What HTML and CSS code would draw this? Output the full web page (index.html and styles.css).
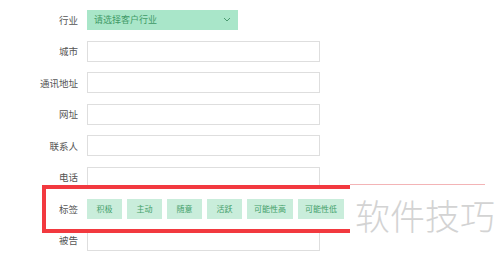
FILE: index.html
```html
<!DOCTYPE html>
<html lang="zh">
<head>
  <meta charset="UTF-8">
  <title>客户信息</title>
  <link rel="stylesheet" href="styles.css">
</head>
<body>
  <div class="form">
    <div class="row">
      <label>行业</label>
      <div class="select">
        <span>请选择客户行业</span>
        <svg width="8" height="5" viewBox="0 0 8 5"><path d="M1 1l3 3 3-3" fill="none" stroke="#4a9a70" stroke-width="1"/></svg>
      </div>
    </div>
    <div class="row"><label>城市</label><div class="input"></div></div>
    <div class="row"><label>通讯地址</label><div class="input"></div></div>
    <div class="row"><label>网址</label><div class="input"></div></div>
    <div class="row"><label>联系人</label><div class="input"></div></div>
    <div class="row"><label>电话</label><div class="input"></div></div>
    <div class="row">
      <label>标签</label>
      <div class="tags">
        <span class="tag">积极</span>
        <span class="tag">主动</span>
        <span class="tag">随意</span>
        <span class="tag">活跃</span>
        <span class="tag">可能性高</span>
        <span class="tag">可能性低</span>
      </div>
    </div>
    <div class="row"><label>被告</label><div class="input"></div></div>
  </div>

  <div class="mark-box"></div>
  <div class="mark-line"></div>
  <div class="watermark">软件技巧</div>
</body>
</html>
```
FILE: styles.css
```css
body {
  margin: 0;
  background: #fff;
  font-family: "Noto Sans CJK SC", "Noto Sans", sans-serif;
  color: #555;
  position: relative;
  height: 259px;
  overflow: hidden;
}
.form {
  padding-top: 9px;
}
.row {
  display: flex;
  align-items: center;
  height: 21px;
  margin-bottom: 10.5px;
}
.row label {
  width: 78px;
  text-align: right;
  font-size: 9.5px;
  margin-right: 9px;
}
.select {
  width: 151px;
  height: 20px;
  background: #a9e6c9;
  display: flex;
  align-items: center;
  justify-content: space-between;
  padding: 0 7px 0 7px;
  box-sizing: border-box;
  font-size: 9px;
  color: #3f9a67;
}
.input {
  width: 233px;
  height: 21px;
  box-sizing: border-box;
  border: 1px solid #dedede;
}
.tags {
  display: flex;
  gap: 5px;
}
.tag {
  height: 20px;
  min-width: 35px;
  padding: 0 7px;
  box-sizing: border-box;
  background: #c9eddb;
  color: #43a06a;
  font-size: 8px;
  display: flex;
  align-items: center;
  justify-content: center;
}
.mark-box {
  position: absolute;
  left: 42px;
  top: 185px;
  width: 304px;
  height: 40px;
  border: 4px solid #f2393f;
  border-right: none;
}
.mark-line {
  position: absolute;
  left: 350px;
  top: 184px;
  width: 135px;
  height: 1px;
  background: #f3b4b6;
}
.watermark {
  position: absolute;
  left: 355px;
  top: 193px;
  font-size: 35px;
  font-weight: 300;
  line-height: 44px;
  color: #d3d3d3;
}
```
